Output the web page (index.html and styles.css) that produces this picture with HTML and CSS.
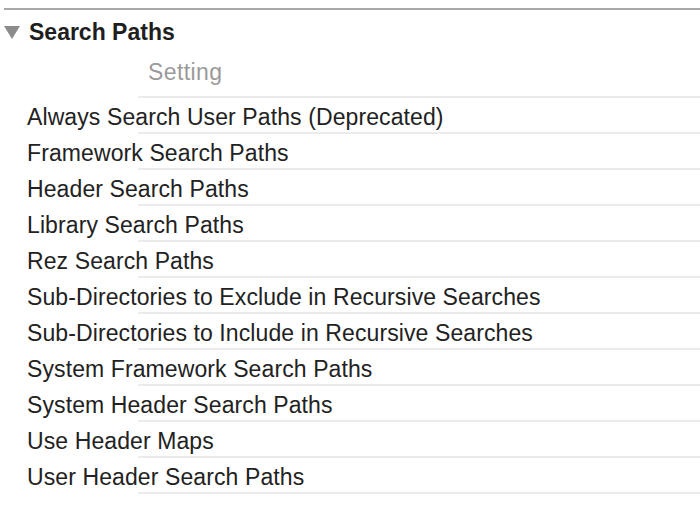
FILE: index.html
```html
<!DOCTYPE html>
<html>
<head>
<meta charset="utf-8">
<link rel="stylesheet" href="styles.css">
</head>
<body>
<div class="panel">
  <div class="topline"></div>
  <div class="group-header">
    <span class="disclosure"></span>
    <span class="group-title">Search Paths</span>
  </div>
  <div class="column-header"><span class="col-title">Setting</span></div>
  <ul class="rows">
    <li class="row">Always Search User Paths (Deprecated)</li>
    <li class="row">Framework Search Paths</li>
    <li class="row">Header Search Paths</li>
    <li class="row">Library Search Paths</li>
    <li class="row">Rez Search Paths</li>
    <li class="row">Sub-Directories to Exclude in Recursive Searches</li>
    <li class="row">Sub-Directories to Include in Recursive Searches</li>
    <li class="row">System Framework Search Paths</li>
    <li class="row">System Header Search Paths</li>
    <li class="row">Use Header Maps</li>
    <li class="row">User Header Search Paths</li>
  </ul>
</div>
</body>
</html>
```

FILE: styles.css
```css
html, body {
  margin: 0;
  padding: 0;
  background: #ffffff;
}

.panel {
  width: 700px;
  height: 528px;
  padding-top: 8px;
  box-sizing: border-box;
  font-family: "Liberation Sans", Arial, sans-serif;
  color: #222222;
}

.topline {
  margin-left: 4px;
  height: 2px;
  background: #a9a9a9;
}

.group-header {
  display: flex;
  align-items: center;
  height: 44px;
}

.disclosure {
  width: 0;
  height: 0;
  margin-left: 4px;
  margin-right: 9px;
  border-left: 8px solid transparent;
  border-right: 8px solid transparent;
  border-top: 13px solid #8c8c8c;
}

.group-title {
  font-size: 23px;
  font-weight: bold;
  color: #1e1e1e;
}

.column-header {
  height: 44px;
  padding-left: 148px;
  padding-bottom: 8px;
  box-sizing: border-box;
  display: flex;
  align-items: center;
  background-image: linear-gradient(#ebebeb, #ebebeb);
  background-repeat: no-repeat;
  background-position: 138px 100%;
  background-size: 100% 2px;
}

.col-title {
  font-size: 23px;
  letter-spacing: 0.4px;
  color: #9a9a9a;
}

.rows {
  list-style: none;
  margin: 0;
  padding: 0;
}

.row {
  height: 36px;
  box-sizing: border-box;
  padding-left: 27px;
  padding-top: 2px;
  display: flex;
  align-items: center;
  font-size: 23px;
  letter-spacing: 0.1px;
  color: #222222;
  background-image: linear-gradient(#ebebeb, #ebebeb);
  background-repeat: no-repeat;
  background-position: 138px 100%;
  background-size: 100% 2px;
}
```
